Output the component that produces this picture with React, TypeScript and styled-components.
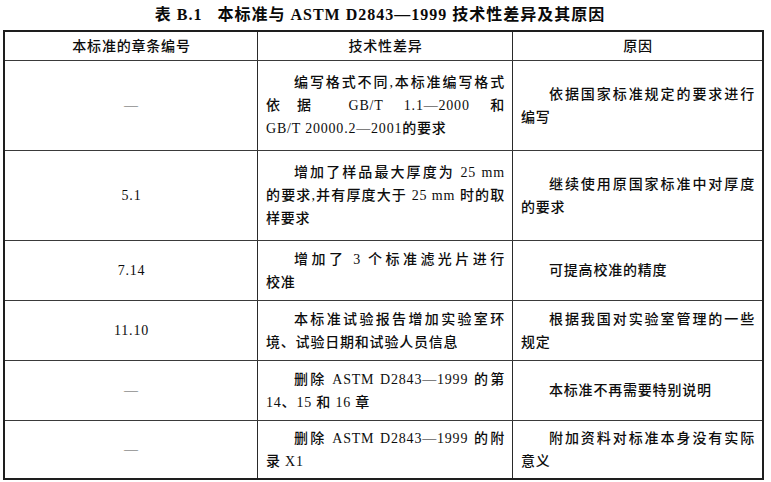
import styled, { createGlobalStyle } from "styled-components";

const GlobalStyle = createGlobalStyle`
  html, body {
    margin: 0;
    padding: 0;
    background: #fff;
  }
  body {
    font-family: "Liberation Serif", "Noto Sans CJK SC", serif;
    color: #0d0d0d;
  }
`;

const Page = styled.div`
  width: 771px;
  height: 482px;
  padding-left: 3px;
  box-sizing: border-box;
  overflow: hidden;
`;

const Caption = styled.div`
  height: 30px;
  display: flex;
  align-items: center;
  justify-content: center;
  padding: 0 14px 4px 0;
  box-sizing: border-box;
  font-family: "Liberation Serif", "Noto Sans CJK SC", serif;
  font-weight: bold;
  font-size: 16px;
  letter-spacing: 1px;
  color: #0a0a0a;
  white-space: pre;
`;

const Table = styled.div`
  width: 761px;
  border: 2px solid #1e1e1e;
  box-sizing: border-box;
`;

const Row = styled.div<{ $h: number; $last?: boolean }>`
  display: grid;
  grid-template-columns: 253px 255px 1fr;
  height: ${({ $h }) => $h}px;
  border-bottom: ${({ $last }) => ($last ? "none" : "1px solid #3a3a3a")};
  box-sizing: border-box;
`;

const Cell = styled.div<{ $center?: boolean; $last?: boolean }>`
  display: flex;
  flex-direction: column;
  justify-content: center;
  align-items: ${({ $center }) => ($center ? "center" : "stretch")};
  padding: 0 7px 0 8px;
  border-right: ${({ $last }) => ($last ? "none" : "1px solid #2a2a2a")};
  font-size: 14px;
  font-weight: 500;
  letter-spacing: 0.8px;
  line-height: 23px;
  box-sizing: border-box;
`;

const HeadText = styled.span`
  font-size: 14px;
  letter-spacing: 0.8px;
`;

const Line = styled.span<{ $indent?: boolean; $justify?: boolean }>`
  display: block;
  text-indent: ${({ $indent }) => ($indent ? "2em" : "0")};
  text-align: ${({ $justify }) => ($justify ? "justify" : "left")};
  text-align-last: ${({ $justify }) => ($justify ? "justify" : "left")};
  white-space: nowrap;
`;

const Clause = styled.span<{ $dim?: boolean }>`
  color: ${({ $dim }) => ($dim ? "#555" : "#0d0d0d")};
  font-weight: normal;
`;

interface Entry {
  no: string;
  diff: string[];
  reason: string[];
  h: number;
}

const rows: Entry[] = [
  {
    no: "—",
    diff: ["编写格式不同,本标准编写格式", "依据 GB/T 1.1—2000 和", "GB/T 20000.2—2001的要求"],
    reason: ["依据国家标准规定的要求进行", "编写"],
    h: 90,
  },
  {
    no: "5.1",
    diff: ["增加了样品最大厚度为 25 mm", "的要求,并有厚度大于 25 mm 时的取", "样要求"],
    reason: ["继续使用原国家标准中对厚度", "的要求"],
    h: 90,
  },
  {
    no: "7.14",
    diff: ["增加了 3 个标准滤光片进行", "校准"],
    reason: ["可提高校准的精度"],
    h: 60,
  },
  {
    no: "11.10",
    diff: ["本标准试验报告增加实验室环", "境、试验日期和试验人员信息"],
    reason: ["根据我国对实验室管理的一些", "规定"],
    h: 60,
  },
  {
    no: "—",
    diff: ["删除 ASTM D2843—1999 的第", "14、15 和 16 章"],
    reason: ["本标准不再需要特别说明"],
    h: 60,
  },
  {
    no: "—",
    diff: ["删除 ASTM D2843—1999 的附", "录 X1"],
    reason: ["附加资料对标准本身没有实际", "意义"],
    h: 57,
  },
];

const Paragraph = ({ lines }: { lines: string[] }) => (
  <>
    {lines.map((text, i) => (
      <Line key={i} $indent={i === 0} $justify={i < lines.length - 1}>
        {text}
      </Line>
    ))}
  </>
);

const App = () => {
  return (
    <Page>
      <GlobalStyle />
      <Caption>{"表 B.1   本标准与 ASTM D2843—1999 技术性差异及其原因"}</Caption>
      <Table>
        <Row $h={29}>
          <Cell $center>
            <HeadText>本标准的章条编号</HeadText>
          </Cell>
          <Cell $center>
            <HeadText>技术性差异</HeadText>
          </Cell>
          <Cell $center $last>
            <HeadText>原因</HeadText>
          </Cell>
        </Row>
        {rows.map((r, i) => (
          <Row key={i} $h={r.h} $last={i === rows.length - 1}>
            <Cell $center>
              <Clause $dim={r.no === "—"}>{r.no}</Clause>
            </Cell>
            <Cell>
              <Paragraph lines={r.diff} />
            </Cell>
            <Cell $last>
              <Paragraph lines={r.reason} />
            </Cell>
          </Row>
        ))}
      </Table>
    </Page>
  );
};

export default App;
